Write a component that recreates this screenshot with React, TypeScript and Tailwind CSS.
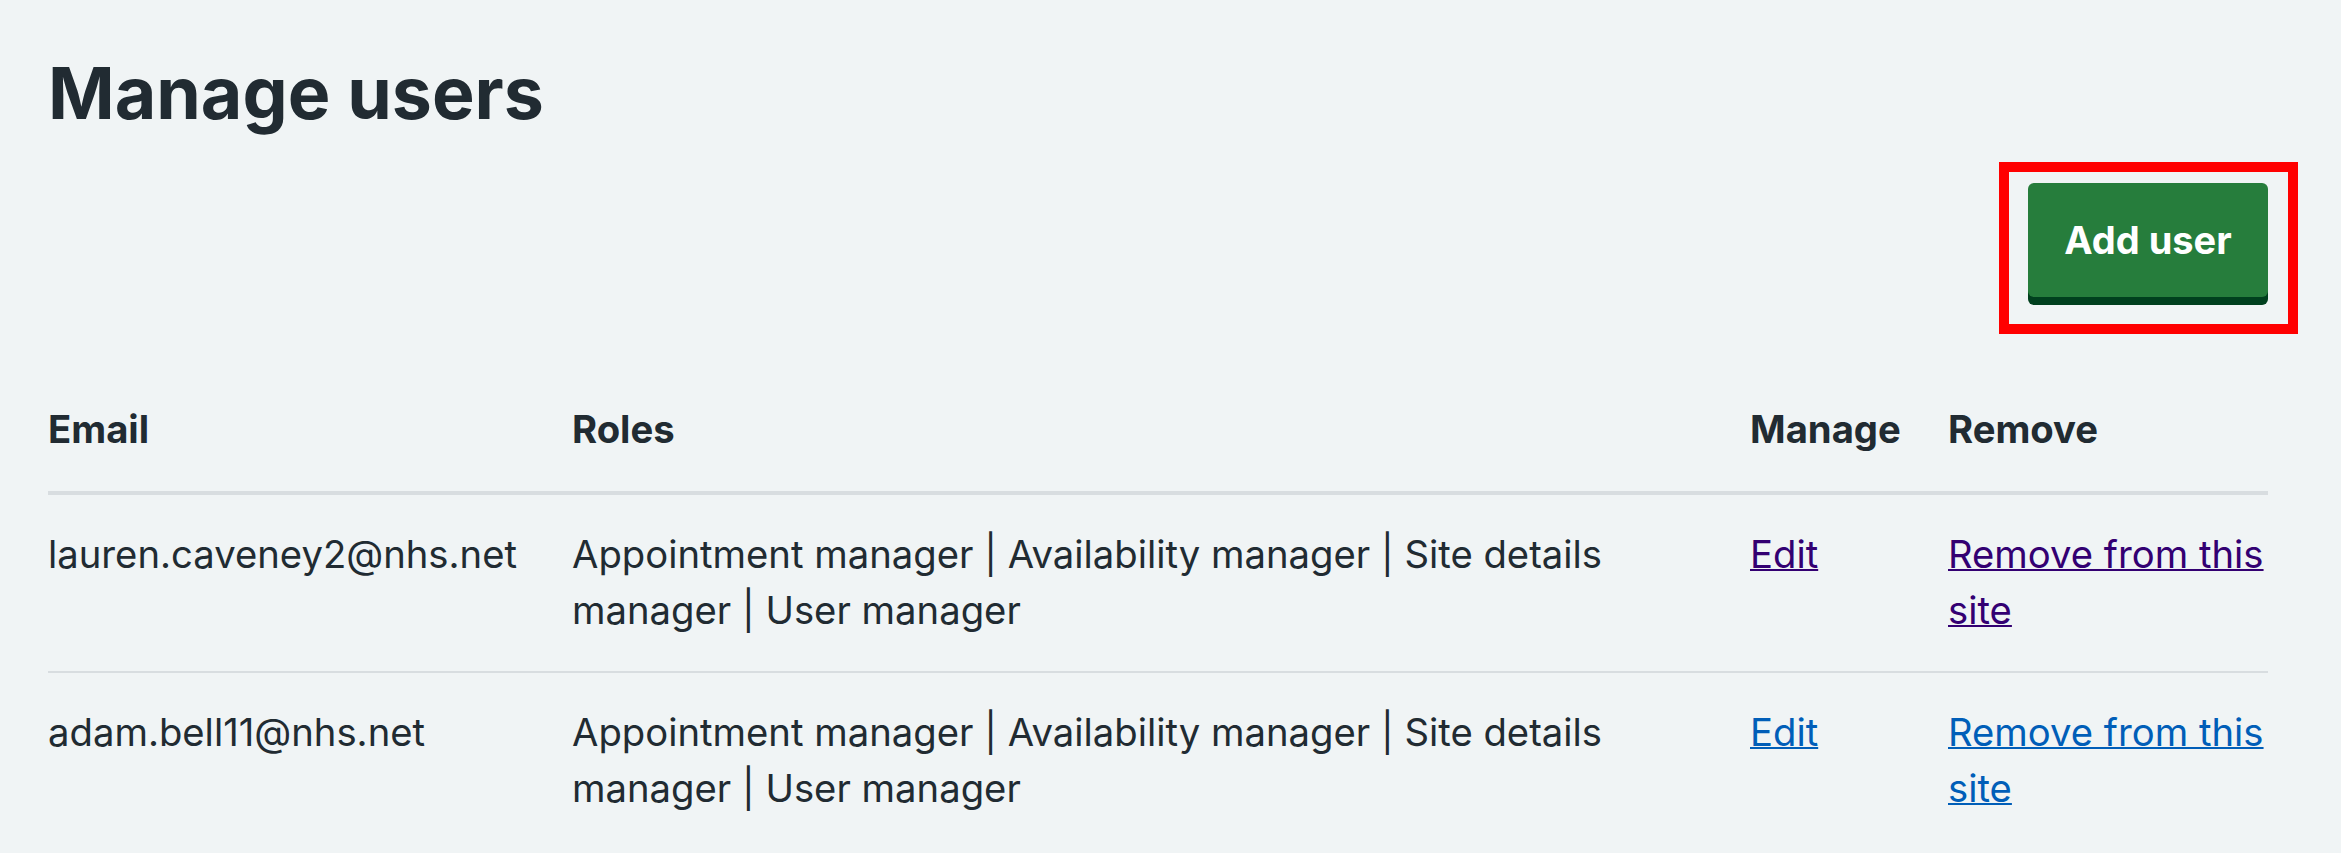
import React from "react";

type UserRow = {
  email: string;
  roles: string[];
  visited: boolean;
};

const USERS: UserRow[] = [
  {
    email: "lauren.caveney2@nhs.net",
    roles: ["Appointment manager", "Availability manager", "Site details manager", "User manager"],
    visited: true,
  },
  {
    email: "adam.bell11@nhs.net",
    roles: ["Appointment manager", "Availability manager", "Site details manager", "User manager"],
    visited: false,
  },
];

export default function App() {
  return (
    <div className="min-h-screen bg-[#f0f4f5] font-['Inter','Noto_Sans',sans-serif] text-[#212b32]">
      <main className="pl-[48px] pr-[73px] pt-[51px]">
        <h1 className="m-0 text-[71.6px] font-bold leading-[84px] tracking-normal">Manage users</h1>

        <div className="mt-[48px] flex justify-end">
          <div className="relative">
            <button className="flex h-[114px] w-[240px] items-center justify-center rounded-[6px] bg-[#267d3c] text-[38px] font-bold leading-[56px] text-white shadow-[0_8px_0_#00401e]">
              Add user
            </button>
            {/* annotation frame */}
            <span className="pointer-events-none absolute -bottom-[37px] -left-[29px] -right-[30px] -top-[21px] border-[10px] border-[#ff0000]" />
          </div>
        </div>

        <table className="mt-[74px] w-full table-fixed border-collapse text-left text-[38.25px] leading-[56px]">
          <colgroup>
            <col className="w-[524px]" />
            <col className="w-[1178px]" />
            <col className="w-[198px]" />
            <col />
          </colgroup>
          <thead>
            <tr className="border-b-[4px] border-[#d8dde0]">
              <Th>Email</Th>
              <Th>Roles</Th>
              <Th>Manage</Th>
              <Th last>Remove</Th>
            </tr>
          </thead>
          <tbody>
            {USERS.map((u) => {
              const link = u.visited ? "text-[#330072]" : "text-[#005eb8]";
              return (
                <tr key={u.email} className="border-b-[2px] border-[#d8dde0] last:border-b-0">
                  <Td>{u.email}</Td>
                  <Td>{u.roles.join(" | ")}</Td>
                  <Td>
                    <a href="#" className={`${link} underline decoration-[2px]`}>
                      Edit
                    </a>
                  </Td>
                  <Td last>
                    <a href="#" className={`${link} underline decoration-[2px]`}>
                      Remove from this site
                    </a>
                  </Td>
                </tr>
              );
            })}
          </tbody>
        </table>
      </main>
    </div>
  );
}

function Th({ children, last }: { children: React.ReactNode; last?: boolean }) {
  return (
    <th className={`pb-[34px] pt-[30px] align-top font-bold ${last ? "pr-0" : "pr-[48px]"}`}>{children}</th>
  );
}

function Td({ children, last }: { children: React.ReactNode; last?: boolean }) {
  return (
    <td className={`pb-[33px] pt-[31px] align-top font-normal ${last ? "pr-0" : "pr-[48px]"}`}>{children}</td>
  );
}
